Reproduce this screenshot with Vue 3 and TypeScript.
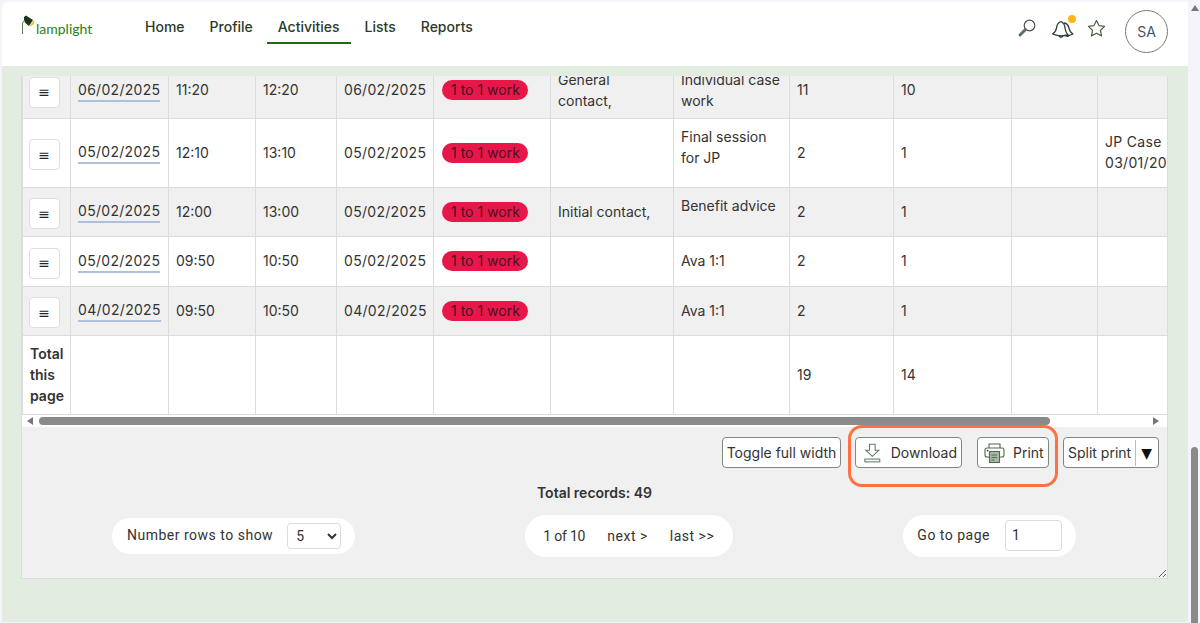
<template>
  <div class="app">
    <div class="window">
      <header class="topbar">
        <div class="logo">
          <svg width="16" height="20" viewBox="0 0 16 20">
            <path d="M1.5 19 V9 Q1.5 6.5 3 6" fill="none" stroke="#5d7a5a" stroke-width="1" />
            <path d="M3 2 L5 0.5 L12 5 L8 11 L5.5 9 Q2.5 7 3 2 Z" fill="#17391a" />
            <path d="M8.5 11.5 L12.5 5.5 L13.5 6.5 Q13 10.5 8.5 11.5 Z" fill="#f7bd12" />
          </svg>
          <span>lamplight</span>
        </div>
        <nav class="nav">
          <a v-for="item in navItems" :key="item" class="nav-item" :class="{ active: item === 'Activities' }">{{ item }}</a>
        </nav>
        <div class="top-icons">
          <svg class="ic-search" width="20" height="20" viewBox="0 0 20 20" fill="none">
            <circle cx="12.5" cy="7.5" r="5.3" stroke="#4a524a" stroke-width="1.2" />
            <path d="M8.5 11.5 L3 17" stroke="#5f6f5f" stroke-width="3" stroke-linecap="round" />
          </svg>
          <span class="bell-wrap">
            <svg width="24" height="20" viewBox="0 0 24 20" fill="none" stroke="#2c3f2c" stroke-width="1.3" stroke-linejoin="round">
              <path d="M1.5 15 Q5 13 5.5 9 Q6 4 10 2.5 Q13.5 4 14 9 Q14.5 13 17 16 Q9 18 1.5 15 Z" />
              <path d="M13 4 Q17 4.5 18 9 Q18.5 13 22 15 Q18 17 14 16.5" />
              <path d="M8 17 Q10 19.5 12 17 M15 16.5 Q17 18.5 18.5 16" />
            </svg>
            <i class="dot"></i>
          </span>
          <svg class="ic-star" width="19" height="19" viewBox="0 0 19 19" fill="none">
            <path d="M9.5 1.5 L12 6.6 L17.6 7.4 L13.5 11.3 L14.5 16.9 L9.5 14.2 L4.5 16.9 L5.5 11.3 L1.4 7.4 L7 6.6 Z" stroke="#4b5f4b" stroke-width="1.2" stroke-linejoin="round" />
          </svg>
          <div class="avatar">SA</div>
        </div>
      </header>

      <main class="content">
        <section class="panel">
          <div class="table-view">
            <table class="grid">
              <colgroup>
                <col v-for="(w, i) in colWidths" :key="i" :style="{ width: w + 'px' }" />
              </colgroup>
              <tbody>
                <tr v-for="(row, i) in rows" :key="i" :class="{ shaded: i % 2 === 0 }" :style="{ height: row.height + 'px' }">
                  <td class="menu-cell"><button class="menu-btn">≡</button></td>
                  <td><a class="date-link">{{ row.date }}</a></td>
                  <td>{{ row.start }}</td>
                  <td>{{ row.end }}</td>
                  <td class="date-plain">{{ row.date }}</td>
                  <td><span class="badge">1 to 1 work</span></td>
                  <td>{{ row.stage }}</td>
                  <td :class="{ lifted: row.lifted }">{{ row.title }}</td>
                  <td>{{ row.a }}</td>
                  <td>{{ row.b }}</td>
                  <td></td>
                  <td class="date-plain">{{ row.linked }}</td>
                </tr>
                <tr class="total-row">
                  <td class="total-label">Total this page</td>
                  <td></td><td></td><td></td><td></td><td></td><td></td><td></td>
                  <td>19</td>
                  <td>14</td>
                  <td></td><td></td>
                </tr>
              </tbody>
            </table>
          </div>

          <div class="hscroll">
            <i class="arrow-left"></i>
            <div class="hthumb"></div>
            <i class="arrow-right"></i>
          </div>

          <div class="footer">
            <div class="actions">
              <button class="btn btn-toggle">Toggle full width</button>
              <button class="btn btn-download">
                <svg width="20" height="22" viewBox="0 0 20 22" fill="none" stroke="#5f7a5f" stroke-width="1.1">
                  <path d="M7 1.5 H13 V8 H17 L10 14.5 L3 8 H7 Z" />
                  <rect x="2" y="17.5" width="16" height="3" />
                </svg>
                <span>Download</span>
              </button>
              <button class="btn btn-print">
                <svg width="21" height="22" viewBox="0 0 21 22" fill="none" stroke="#4f6a4f" stroke-width="1.1">
                  <path d="M5 6 V2 H16 V6" />
                  <path d="M5 15 H3 Q1 15 1 13 V8 Q1 6 3 6 H18 Q20 6 20 8 V13 Q20 15 18 15 H16" />
                  <rect x="5.5" y="9.5" width="10" height="11" fill="#a9b8a9" />
                  <path d="M7.5 13 H13 M7.5 15.5 H13 M7.5 18 H10.5" stroke="#4f6a4f" />
                  <circle cx="3.6" cy="8.6" r="0.9" fill="#2c3f2c" stroke="none" />
                </svg>
                <span>Print</span>
              </button>
              <button class="btn btn-split">
                <span class="split-label">Split print</span>
                <span class="split-caret">▼</span>
              </button>
              <div class="highlight"></div>
            </div>

            <div class="records">Total records: 49</div>

            <div class="pager-row">
              <div class="pill pill-rows">
                <label>Number rows to show</label>
                <select class="rows-select">
                  <option>5</option>
                  <option>10</option>
                  <option>25</option>
                </select>
              </div>
              <div class="pill pill-pages">
                <span class="page-of">1 of 10</span>
                <a>next &gt;</a>
                <a>last &gt;&gt;</a>
              </div>
              <div class="pill pill-goto">
                <label>Go to page</label>
                <input class="page-input" type="text" value="1" />
              </div>
            </div>
          </div>
        </section>
      </main>
    </div>

    <aside class="page-scroll">
      <i class="arrow-up"></i>
      <div class="vthumb"></div>
    </aside>
  </div>
</template>

<script setup lang="ts">
interface Row {
  height: number;
  date: string;
  start: string;
  end: string;
  stage: string;
  title: string;
  a: string;
  b: string;
  linked: string;
  lifted?: boolean;
}

const navItems: string[] = ['Home', 'Profile', 'Activities', 'Lists', 'Reports'];
const colWidths: number[] = [48, 98, 87, 81, 97, 117, 123, 116, 104, 118, 86, 120];

const rows: Row[] = [
  { height: 56, date: '06/02/2025', start: '11:20', end: '12:20', stage: 'General contact,', title: 'Individual case work', a: '11', b: '10', linked: '' },
  { height: 69, date: '05/02/2025', start: '12:10', end: '13:10', stage: '', title: 'Final session for JP', a: '2', b: '1', linked: 'JP Case 03/01/2025', lifted: true },
  { height: 49, date: '05/02/2025', start: '12:00', end: '13:00', stage: 'Initial contact,', title: 'Benefit advice', a: '2', b: '1', linked: '', lifted: true },
  { height: 50, date: '05/02/2025', start: '09:50', end: '10:50', stage: '', title: 'Ava 1:1', a: '2', b: '1', linked: '' },
  { height: 49, date: '04/02/2025', start: '09:50', end: '10:50', stage: '', title: 'Ava 1:1', a: '2', b: '1', linked: '' }
];
</script>

<style>
html, body {
  margin: 0;
  overflow: hidden;
}
</style>

<style scoped>
.app {
  display: flex;
  height: 623px;
  width: 1200px;
  background: #f4f4fa;
  font-family: Inter, "Noto Sans", sans-serif;
  font-size: 14px;
  color: #333;
  overflow: hidden;
}

.window {
  width: 1186px;
  margin: 2px 0 0 2px;
  display: flex;
  flex-direction: column;
}

.topbar {
  height: 64px;
  flex-shrink: 0;
  display: flex;
  background: #fff;
  border-top-left-radius: 6px;
}

.logo {
  width: 132px;
  padding: 13px 0 0 19px;
  box-sizing: border-box;
  display: flex;
  align-items: flex-start;
  color: #2f7d22;
  font-family: Lato, sans-serif;
  font-size: 14px;
}

.logo span {
  margin: 5px 0 0 -1px;
}

.nav {
  display: flex;
  gap: 3px;
}

.nav-item {
  height: 40px;
  padding: 0 11px;
  line-height: 50px;
  font-weight: 500;
  color: #2b3a2b;
}

.nav-item.active {
  border-bottom: 2px solid #1d6b12;
}

.top-icons {
  margin-left: auto;
  display: flex;
  align-items: flex-start;
  padding: 15px 20px 0 0;
}

.ic-search {
  margin-right: 14px;
  margin-top: 1px;
}

.bell-wrap {
  position: relative;
  display: block;
  margin-right: 12px;
  margin-top: 2px;
  height: 20px;
}

.dot {
  position: absolute;
  left: 17px;
  top: -4px;
  width: 8px;
  height: 8px;
  border-radius: 50%;
  background: #fdb714;
}

.ic-star {
  margin-right: 19px;
  margin-top: 2px;
}

.avatar {
  width: 41px;
  height: 41px;
  margin-top: -7px;
  border: 1px solid #6f7f6f;
  border-radius: 50%;
  display: flex;
  align-items: center;
  justify-content: center;
  color: #44546a;
}

.content {
  flex: 1;
  background: #e2ece0;
  padding: 10px 20px 43px 19px;
  margin-bottom: 1px;
  min-height: 0;
}

.panel {
  height: 503px;
  display: flex;
  flex-direction: column;
  box-sizing: border-box;
  border: 1px solid #dcdcdc;
  border-top: 0;
  background: #f0f0f0;
  overflow: hidden;
  resize: both;
}

.table-view {
  height: 339px;
  flex-shrink: 0;
  overflow: hidden;
}

.grid {
  table-layout: fixed;
  width: 1195px;
  margin-top: -14px;
  border-collapse: collapse;
  background: #fff;
}

.grid td {
  border: 1px solid #dcdcdc;
  padding: 0 7px 2px;
  line-height: 21px;
  vertical-align: middle;
  overflow: hidden;
}

.grid tr.shaded td {
  background: #f0f0f0;
}

.grid td.lifted {
  padding-bottom: 13px;
}

.grid td.menu-cell {
  padding: 0 5px 0 0;
  text-align: center;
}

.menu-btn {
  width: 31px;
  height: 31px;
  margin-top: 3px;
  padding: 0;
  border: 1px solid #dedede;
  border-radius: 4px;
  background: #fff;
  font-family: "DejaVu Sans", sans-serif;
  font-size: 14px;
  color: #222;
}

.date-link {
  display: inline-block;
  margin-top: 2px;
  white-space: nowrap;
  letter-spacing: 0.3px;
  line-height: 20px;
  border-bottom: 2px solid #b0c0da;
}

.date-plain {
  letter-spacing: 0.3px;
}

.badge {
  display: inline-block;
  margin-left: 1px;
  padding: 0 8px 0 9px;
  line-height: 20px;
  border-radius: 10px;
  background: #e8174a;
  color: #4a1020;
  white-space: nowrap;
}

.total-row {
  height: 79px;
}

.total-label {
  font-weight: 600;
}

.hscroll {
  height: 12px;
  flex-shrink: 0;
  display: flex;
  align-items: center;
  background: #fff;
  padding: 0 8px 0 5px;
}

.arrow-left {
  border: 4px solid transparent;
  border-right: 6px solid #777;
  border-left: 0;
}

.arrow-right {
  margin-left: auto;
  border: 4px solid transparent;
  border-left: 6px solid #777;
  border-right: 0;
}

.hthumb {
  width: 1011px;
  height: 8px;
  margin-left: 6px;
  border-radius: 4px;
  background: #8a8a8a;
}

.footer {
  flex: 1;
}

.actions {
  position: relative;
  display: flex;
  justify-content: flex-end;
  gap: 14px;
  padding: 10px 8px 0 0;
}

.btn {
  height: 31px;
  box-sizing: border-box;
  display: flex;
  align-items: center;
  padding: 0 4px;
  border: 1px solid #7d8a7d;
  border-radius: 4px;
  background: #fff;
  font: inherit;
  color: #333;
  white-space: nowrap;
}

.btn-toggle {
  width: 119px;
  padding: 0;
  justify-content: center;
}

.btn-download {
  width: 107px;
  padding-left: 7px;
}

.btn-download span {
  margin-left: 9px;
}

.btn-print {
  width: 72px;
  padding-left: 6px;
  margin-left: 1px;
}

.btn-print span {
  margin-left: 8px;
}

.btn-split {
  width: 96px;
}

.split-label {
  padding-right: 4px;
  border-right: 1px solid #bbb;
  line-height: 26px;
}

.split-caret {
  margin-left: 5px;
  color: #111;
  font-family: "DejaVu Sans", sans-serif;
  font-size: 14px;
}

.highlight {
  position: absolute;
  left: 826px;
  top: -2px;
  width: 210px;
  height: 62px;
  box-sizing: border-box;
  border: 3px solid #ff7043;
  border-radius: 14px;
  pointer-events: none;
}

.records {
  margin-top: 16px;
  text-align: center;
  font-size: 14px;
  font-weight: 600;
  line-height: 17px;
}

.pager-row {
  display: flex;
  justify-content: space-between;
  align-items: center;
  padding: 14px 91px 0 90px;
  font-family: Roboto, sans-serif;
  font-size: 14px;
  letter-spacing: 0.5px;
}

.pill {
  display: flex;
  align-items: center;
  background: #fff;
  border-radius: 21px;
  box-sizing: border-box;
}

.pill-rows {
  height: 36px;
  padding: 0 14px 0 15px;
}

.pill-rows label {
  margin-top: -3px;
  margin-right: 14px;
}

.rows-select {
  width: 54px;
  height: 26px;
  border: 1px solid #dcdcdc;
  border-radius: 4px;
  padding-left: 4px;
  background: #fff;
  font: inherit;
  color: #333;
}

.pill-pages {
  height: 42px;
  padding: 0 19px 0 18px;
  gap: 22px;
}

.page-of {
  letter-spacing: -0.2px;
}

.pill-goto {
  height: 42px;
  padding: 0 14px;
}

.pill-goto label {
  margin-right: 15px;
  margin-top: -3px;
}

.page-input {
  width: 57px;
  height: 31px;
  box-sizing: border-box;
  margin-top: -2px;
  padding: 0 6px;
  border: 1px solid #dcdcdc;
  border-radius: 4px;
  font: inherit;
  color: #333;
}

.page-scroll {
  flex: 1;
  position: relative;
  background: #f4f4fa;
}

.arrow-up {
  position: absolute;
  left: 3px;
  top: 5px;
  border: 4px solid transparent;
  border-bottom: 6px solid #777;
  border-top: 0;
}

.vthumb {
  position: absolute;
  left: 3px;
  top: 447px;
  bottom: 0;
  width: 7px;
  background: #8a8a8a;
  border-radius: 4px 4px 0 0;
}
</style>
